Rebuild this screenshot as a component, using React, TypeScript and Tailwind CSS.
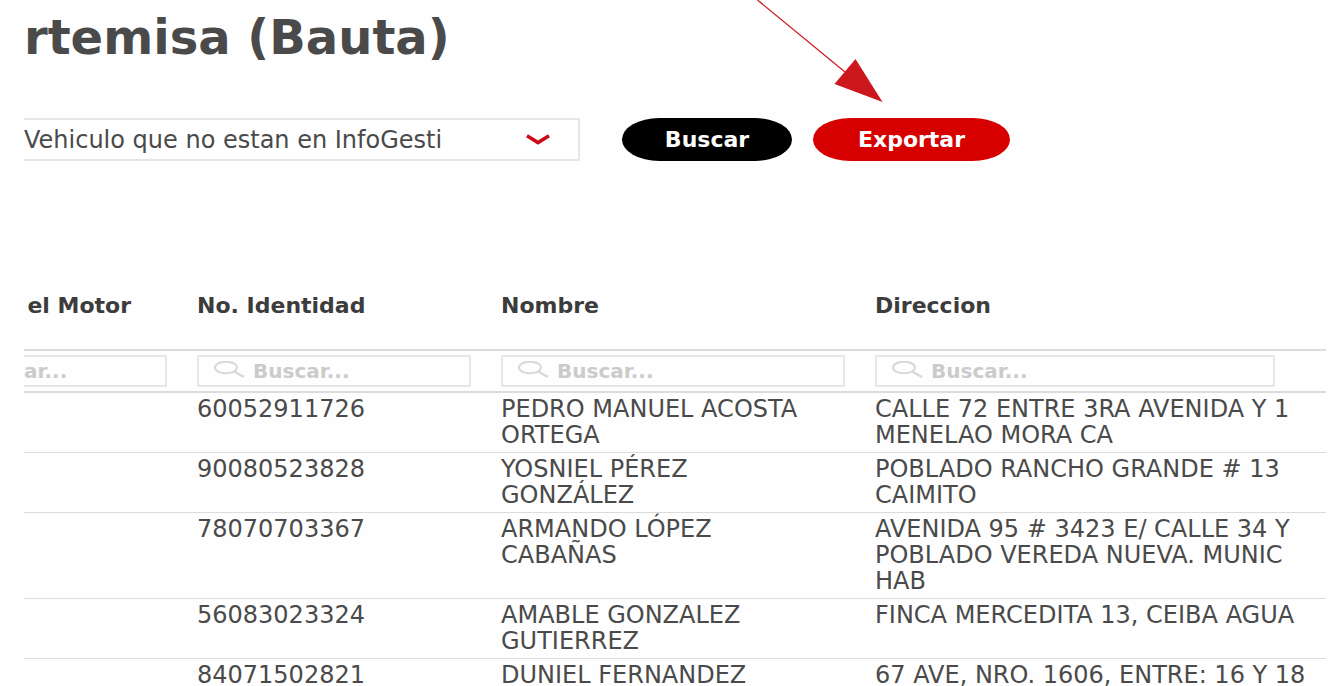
type Row = { id: string; name: string[]; address: string[] };

const rows: Row[] = [
  {
    id: "60052911726",
    name: ["PEDRO MANUEL ACOSTA", "ORTEGA"],
    address: ["CALLE 72 ENTRE 3RA AVENIDA Y 1", "MENELAO MORA CA"],
  },
  {
    id: "90080523828",
    name: ["YOSNIEL PÉREZ", "GONZÁLEZ"],
    address: ["POBLADO RANCHO GRANDE # 13", "CAIMITO"],
  },
  {
    id: "78070703367",
    name: ["ARMANDO LÓPEZ", "CABAÑAS"],
    address: ["AVENIDA 95 # 3423 E/ CALLE 34 Y", "POBLADO VEREDA NUEVA. MUNIC", "HAB"],
  },
  {
    id: "56083023324",
    name: ["AMABLE GONZALEZ", "GUTIERREZ"],
    address: ["FINCA MERCEDITA 13, CEIBA AGUA"],
  },
  {
    id: "84071502821",
    name: ["DUNIEL FERNANDEZ"],
    address: ["67 AVE, NRO. 1606, ENTRE: 16 Y 18"],
  },
];

function Lines({ lines }: { lines: string[] }) {
  return (
    <>
      {lines.map((line) => (
        <span key={line} className="block whitespace-nowrap">
          {line}
        </span>
      ))}
    </>
  );
}

function SearchIcon() {
  return (
    <svg className="h-5 w-8 shrink-0" viewBox="0 0 32 20" fill="none" stroke="#d8d8d8" aria-hidden="true">
      <ellipse cx="13" cy="6.500" rx="11" ry="5.800" strokeWidth="2" />
      <path d="M21 10.500L31 16" strokeWidth="2.400" />
    </svg>
  );
}

function SearchBox({ label }: { label: string }) {
  return (
    <label className="flex h-8 max-w-[400px] items-center gap-2 rounded-xs border-2 border-[#e6e6e6] px-3.5">
      <SearchIcon />
      <input
        type="text"
        aria-label={label}
        placeholder="Buscar..."
        className="w-full min-w-0 text-xl leading-6 font-bold outline-none placeholder:text-[#cbcbcb]"
      />
    </label>
  );
}

export default function App() {
  return (
    <main className="relative h-screen overflow-hidden bg-[#fefefe] pr-3 pl-6 font-['DejaVu_Sans',sans-serif] text-[#4a4a4a]">
      <div className="h-full overflow-hidden">
        <h1 className="pt-3 text-5xl leading-[50px] font-bold whitespace-nowrap">rtemisa (Bauta)</h1>

        <form className="flex items-center pt-14" onSubmit={(e) => e.preventDefault()}>
          <div className="grid w-[556px] items-center">
            <select
              aria-label="Vehiculo"
              className="col-start-1 row-start-1 h-[43px] w-full appearance-none border-2 border-l-0 border-[#e6e6e6] bg-white pr-20 text-2xl text-[#4a4a4a]"
            >
              <option>Vehiculo que no estan en InfoGesti</option>
            </select>
            <svg
              className="pointer-events-none col-start-1 row-start-1 mr-7 h-3 w-7 justify-self-end"
              viewBox="0 0 28 12"
              fill="none"
              stroke="#cc0a17"
              strokeWidth="3.500"
              aria-hidden="true"
            >
              <path d="M3 1.800L14 8.600L25 1.800" />
            </svg>
          </div>
          <button type="submit" className="ml-[42px] h-[43px] w-[170px] rounded-[38px/22px] bg-black text-[22px] font-bold text-white">
            Buscar
          </button>
          <button type="button" className="ml-[21px] h-[43px] w-[197px] rounded-[38px/22px] bg-[#d60000] text-[22px] font-bold text-white">
            Exportar
          </button>
        </form>

        <table className="mt-[124px] w-full table-fixed border-collapse text-left text-2xl leading-[26px]">
          <colgroup>
            <col className="w-[158px]" />
            <col className="w-[304px]" />
            <col className="w-[374px]" />
            <col />
          </colgroup>
          <thead>
            <tr className="h-[65px] border-b-2 border-[#dcdcdc] align-top text-[22px] text-[#3c3c3c]">
              <th className="pt-2 pr-[51px] text-right whitespace-nowrap">el Motor</th>
              <th className="px-[15px] pt-2">No. Identidad</th>
              <th className="px-[15px] pt-2">Nombre</th>
              <th className="px-[15px] pt-2">Direccion</th>
            </tr>
            <tr className="border-b-2 border-[#dcdcdc]">
              <td className="py-1 pr-[15px]">
                <input
                  type="text"
                  aria-label="Motor"
                  placeholder="ar..."
                  className="block h-8 w-full rounded-r-xs border-2 border-l-0 border-[#e6e6e6] text-xl leading-6 font-bold outline-none placeholder:text-[#cbcbcb]"
                />
              </td>
              <td className="px-[15px] py-1">
                <SearchBox label="No. Identidad" />
              </td>
              <td className="px-[15px] py-1">
                <SearchBox label="Nombre" />
              </td>
              <td className="px-[15px] py-1">
                <SearchBox label="Direccion" />
              </td>
            </tr>
          </thead>
          <tbody>
            {rows.map((row) => (
              <tr key={row.id} className="border-b border-[#dcdcdc] align-top">
                <td />
                <td className="px-[15px] pt-[3px] pb-1">{row.id}</td>
                <td className="px-[15px] pt-[3px] pb-1">
                  <Lines lines={row.name} />
                </td>
                <td className="px-[15px] pt-[3px] pb-1">
                  <Lines lines={row.address} />
                </td>
              </tr>
            ))}
          </tbody>
        </table>
      </div>

      <svg className="pointer-events-none absolute top-0 left-[750px] h-[110px] w-[140px]" viewBox="0 0 140 110" aria-hidden="true">
        <path d="M7.500 0L95 72" stroke="#cc171d" strokeWidth="1.200" />
        <path d="M105.500 59L84.500 84L132.500 102Z" fill="#cc171d" />
      </svg>
    </main>
  );
}
